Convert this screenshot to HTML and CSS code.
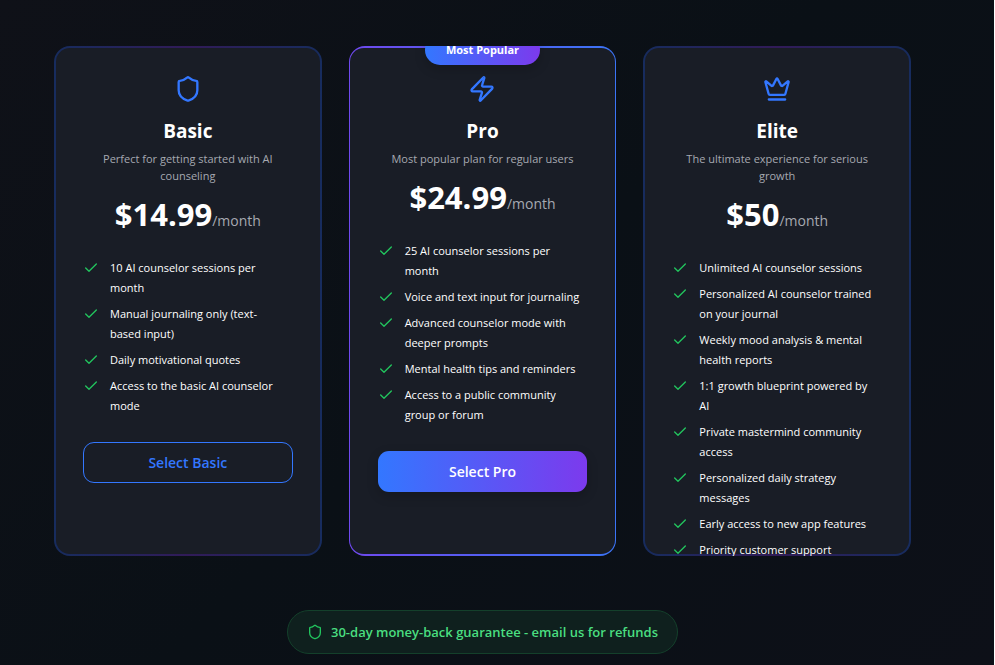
FILE: index.html
```html
<!DOCTYPE html>
<html lang="en">
<head>
<meta charset="utf-8">
<meta name="viewport" content="width=device-width, initial-scale=1">
<title>Plans</title>
<link rel="stylesheet" href="styles.css">
</head>
<body>
<svg class="sprite" aria-hidden="true">
  <symbol id="check" viewBox="0 0 24 24"><path d="M20 6 9 17l-5-5"/></symbol>
  <symbol id="shield" viewBox="0 0 24 24"><path d="M20 13c0 5-3.5 7.5-7.66 8.95a1 1 0 0 1-.67-.01C7.5 20.5 4 18 4 13V6a1 1 0 0 1 1-1c2 0 4.5-1.2 6.24-2.72a1.17 1.17 0 0 1 1.52 0C14.51 3.81 17 5 19 5a1 1 0 0 1 1 1z"/></symbol>
</svg>
<main class="page">
  <section class="plans">
    <article class="card">
      <svg class="plan-icon"><use href="#shield"/></svg>
      <h2>Basic</h2>
      <p class="desc">Perfect for getting started with AI counseling</p>
      <p class="price"><strong>$14.99</strong><span>/month</span></p>
      <ul>
        <li><svg><use href="#check"/></svg>10 AI counselor sessions per month</li>
        <li><svg><use href="#check"/></svg>Manual journaling only (text-based input)</li>
        <li><svg><use href="#check"/></svg>Daily motivational quotes</li>
        <li><svg><use href="#check"/></svg>Access to the basic AI counselor mode</li>
      </ul>
      <button type="button" class="outline">Select Basic</button>
    </article>
    <article class="card popular">
      <span class="badge">Most Popular</span>
      <svg class="plan-icon" viewBox="0 0 24 24"><path d="M4 14a1 1 0 0 1-.78-1.63l9.9-10.2a.5.5 0 0 1 .86.46l-1.92 6.02A1 1 0 0 0 13 10h7a1 1 0 0 1 .78 1.63l-9.9 10.2a.5.5 0 0 1-.86-.46l1.92-6.02A1 1 0 0 0 11 14z"/></svg>
      <h2>Pro</h2>
      <p class="desc">Most popular plan for regular users</p>
      <p class="price"><strong>$24.99</strong><span>/month</span></p>
      <ul>
        <li><svg><use href="#check"/></svg>25 AI counselor sessions per month</li>
        <li><svg><use href="#check"/></svg>Voice and text input for journaling</li>
        <li><svg><use href="#check"/></svg>Advanced counselor mode with deeper prompts</li>
        <li><svg><use href="#check"/></svg>Mental health tips and reminders</li>
        <li><svg><use href="#check"/></svg>Access to a public community group or forum</li>
      </ul>
      <button type="button" class="solid">Select Pro</button>
    </article>
    <article class="card">
      <svg class="plan-icon" viewBox="0 0 24 24"><path d="M11.562 3.266a.5.5 0 0 1 .876 0L15.39 8.87a1 1 0 0 0 1.516.294L21.183 5.5a.5.5 0 0 1 .798.519l-2.834 10.246a1 1 0 0 1-.956.734H5.81a1 1 0 0 1-.957-.734L2.02 6.02a.5.5 0 0 1 .798-.519l4.276 3.664a1 1 0 0 0 1.516-.294zM5 21h14"/></svg>
      <h2>Elite</h2>
      <p class="desc">The ultimate experience for serious growth</p>
      <p class="price"><strong>$50</strong><span>/month</span></p>
      <ul>
        <li><svg><use href="#check"/></svg>Unlimited AI counselor sessions</li>
        <li><svg><use href="#check"/></svg>Personalized AI counselor trained on your journal</li>
        <li><svg><use href="#check"/></svg>Weekly mood analysis &amp; mental health reports</li>
        <li><svg><use href="#check"/></svg>1:1 growth blueprint powered by AI</li>
        <li><svg><use href="#check"/></svg>Private mastermind community access</li>
        <li><svg><use href="#check"/></svg>Personalized daily strategy messages</li>
        <li><svg><use href="#check"/></svg>Early access to new app features</li>
        <li><svg><use href="#check"/></svg>Priority customer support</li>
      </ul>
    </article>
  </section>
  <p class="guarantee"><svg><use href="#shield"/></svg>30-day money-back guarantee - email us for refunds</p>
</main>
</body>
</html>
```
FILE: styles.css
```css
* { box-sizing: border-box; margin: 0; padding: 0; }
html { background: #0c0f16; }
body {
  min-height: 100vh;
  border-right: 1px solid #fff;
  background: linear-gradient(135deg, #0f1118, #0a1016 50%, #0d1018);
  color: #fff;
  font-family: "Segoe UI", "Open Sans", "Noto Sans", sans-serif;
}
.sprite { position: absolute; width: 0; height: 0; }
svg {
  fill: none;
  stroke: currentColor;
  stroke-width: 2;
  stroke-linecap: round;
  stroke-linejoin: round;
}
.page {
  display: flex;
  flex-direction: column;
  align-items: center;
  gap: 54px;
  padding: 46px 83px 10px 54px;
}
.plans {
  display: grid;
  grid-template-columns: repeat(3, 1fr);
  gap: 27px;
  width: 100%;
}
.card {
  position: relative;
  isolation: isolate;
  display: flex;
  flex-direction: column;
  align-items: center;
  height: 510px;
  padding: 29px 29px 0;
  overflow: hidden;
  border-radius: 16px;
  background: linear-gradient(90deg, #172c5e, #311b58, #172c5e);
  text-align: center;
}
.card::before {
  content: "";
  position: absolute;
  inset: 2px;
  z-index: -1;
  border-radius: 14px;
  background: #191d26;
}
.popular { background: linear-gradient(90deg, #6f49ee, #3b74f6); }
.popular::before { inset: 2px 1px; }
.badge {
  position: absolute;
  top: -11px;
  padding: 0 21px;
  border-radius: 15px;
  background: linear-gradient(90deg, #3377ff, #7c3aed);
  box-shadow: 0 4px 12px rgba(0, 0, 0, .2);
  font-size: 11px;
  font-weight: 700;
  line-height: 30px;
  white-space: nowrap;
}
.plan-icon { flex: none; width: 28px; height: 28px; color: #3377ff; }
h2 { margin-top: 14px; font-size: 19px; font-weight: 700; line-height: 28px; }
.desc { margin-top: 5px; color: #a6a9b1; font-size: 11px; line-height: 17px; }
.price { margin-top: 8px; line-height: 44px; white-space: nowrap; }
.price strong { font-size: 31px; font-weight: 700; }
.price span { color: #a6a9b1; font-size: 14px; }
ul {
  display: grid;
  gap: 6px;
  width: 100%;
  margin-top: 15px;
  padding-right: 6px;
  list-style: none;
  text-align: left;
}
li {
  display: flex;
  gap: 11px;
  font-size: 11px;
  font-weight: 500;
  line-height: 20px;
}
li svg { flex: none; width: 16px; height: 16px; margin-top: 2px; color: #22c55e; }
button {
  flex: none;
  width: 100%;
  height: 41px;
  margin-top: 26px;
  border: 0;
  border-radius: 11px;
  font: 600 14px "Segoe UI", "Open Sans", "Noto Sans", sans-serif;
}
.outline { border: 1px solid #3377ff; background: transparent; color: #3377ff; }
.solid {
  background: linear-gradient(90deg, #3377ff, #7c3aed);
  box-shadow: 0 4px 12px rgba(0, 0, 0, .2);
  color: #fff;
}
.guarantee {
  display: flex;
  align-items: center;
  gap: 8px;
  padding: 0 19px;
  border: 1px solid #14402b;
  border-radius: 22px;
  background: #0f201e;
  color: #4ade80;
  font-size: 13px;
  font-weight: 600;
  line-height: 42px;
}
.guarantee svg { width: 16px; height: 16px; color: #22c55e; }
```
